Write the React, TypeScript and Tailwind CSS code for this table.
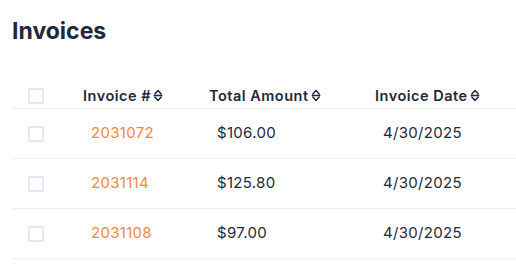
const rows = [
  { id: "2031072", amount: "$106.00", date: "4/30/2025" },
  { id: "2031114", amount: "$125.80", date: "4/30/2025" },
  { id: "2031108", amount: "$97.00", date: "4/30/2025" },
];

function SortIcon() {
  return (
    <svg viewBox="0 0 10 13" className="ml-[2px] h-[13px] w-[10px]" fill="none" aria-hidden>
      <path d="M1.8 5 5 1.6 8.2 5" stroke="#1e293b" strokeWidth="1.5" strokeLinecap="round" strokeLinejoin="round" />
      <path d="M1.2 6.5h7.6" stroke="#1e293b" strokeWidth="1.3" strokeLinecap="round" />
      <path d="M1.8 8 5 11.4 8.2 8" stroke="#1e293b" strokeWidth="1.5" strokeLinecap="round" strokeLinejoin="round" />
    </svg>
  );
}

function Checkbox() {
  return <span className="block size-4 rounded-[2px] border-2 border-[#e2e8f0] bg-white" />;
}

export default function App() {
  return (
    <div className="min-h-screen bg-white pl-3 pt-[15px] font-['Inter',sans-serif]">
      <h1 className="text-[23px] font-bold leading-8 text-[#1e293b]">Invoices</h1>

      <div className="mt-[34px]">
        {/* Header */}
        <div className="grid h-[28px] grid-cols-[71px_126px_166px_1fr] items-center border-b border-[#edf0f3] pt-[2px] text-[14.5px] font-semibold tracking-[0.5px] text-[#1e293b]">
          <div className="pl-4">
            <Checkbox />
          </div>
          <div className="flex items-center">
            Invoice #<SortIcon />
          </div>
          <div className="flex items-center">
            Total Amount<SortIcon />
          </div>
          <div className="flex items-center">
            Invoice Date<SortIcon />
          </div>
        </div>

        {rows.map((r) => (
          <div
            key={r.id}
            className="grid h-[50px] grid-cols-[71px_126px_166px_1fr] items-center border-b border-[#edf0f3] text-[15px] tracking-[0.3px] text-[#1f2937]"
          >
            <div className="pl-4">
              <Checkbox />
            </div>
            <div className="pl-2 text-[#f08a3c]">{r.id}</div>
            <div className="pl-2">{r.amount}</div>
            <div className="pl-2">{r.date}</div>
          </div>
        ))}
      </div>
    </div>
  );
}
